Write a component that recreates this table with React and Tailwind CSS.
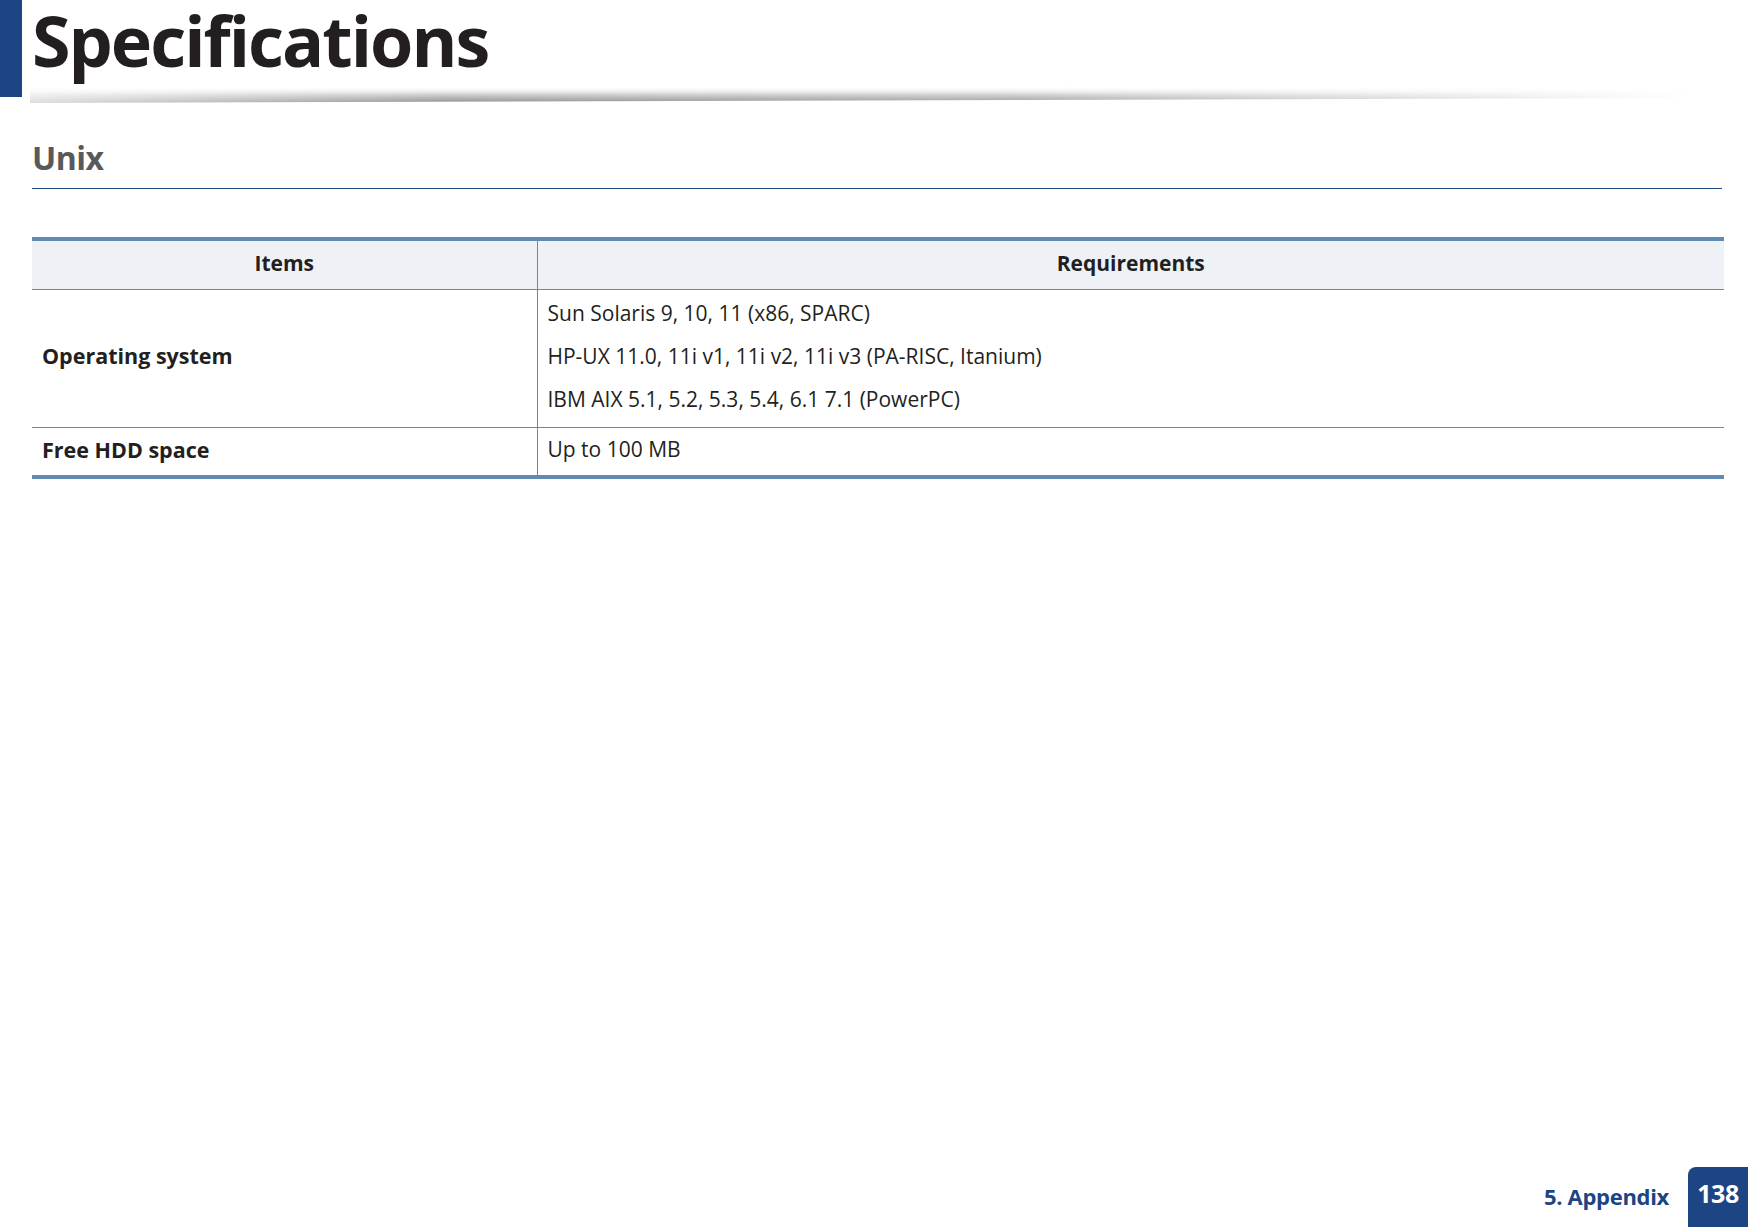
export default function App() {
  const font = "font-['Myriad_Pro','Open_Sans',sans-serif]";
  return (
    <div className={`relative w-[1748px] h-[1227px] bg-white flex flex-col ${font} text-[#231f20]`}>
      {/* Header */}
      <div className="relative flex items-start h-[97px]">
        <div className="w-[22px] h-[97px] bg-[#1d4583]" />
        <h1 className="ml-[10px] mt-[-2px] text-[70px] leading-[84px] font-bold tracking-[-2px] text-[#231f20]">
          Specifications
        </h1>
        <svg className="absolute left-[30px] top-[82px]" width="1660" height="24" viewBox="0 0 1660 24">
          <defs>
            <linearGradient id="sv" x1="0" y1="0" x2="0" y2="1">
              <stop offset="0" stopColor="#ffffff" stopOpacity="0" />
              <stop offset="0.5" stopColor="#d0d0d0" stopOpacity="1" />
              <stop offset="1" stopColor="#8f8f8f" stopOpacity="1" />
            </linearGradient>
            <linearGradient id="sh" x1="0" y1="0" x2="1" y2="0">
              <stop offset="0" stopColor="#fff" stopOpacity="0.3" />
              <stop offset="0.25" stopColor="#fff" stopOpacity="1" />
              <stop offset="0.6" stopColor="#fff" stopOpacity="0.9" />
              <stop offset="1" stopColor="#fff" stopOpacity="0" />
            </linearGradient>
            <mask id="sm">
              <rect x="0" y="0" width="1660" height="24" fill="url(#sh)" />
            </mask>
          </defs>
          <polygon points="0,6 1660,4 1660,16 0,21" fill="url(#sv)" mask="url(#sm)" />
        </svg>
      </div>

      {/* Section heading */}
      <div className="mx-[32px] mt-[40px] border-b border-[#1f4a85] pb-[10px] w-[1690px]">
        <h2 className="text-[32px] leading-[41px] font-bold text-[#58595b] tracking-[-0.5px]">Unix</h2>
      </div>

      {/* Table */}
      <table className="ml-[32px] mt-[48px] w-[1692px] border-collapse text-[21px] text-[#231f20]">
        <thead>
          <tr className="bg-[#eef2f6] border-t-[4px] border-[#6089b3]">
            <th className="w-[505px] h-[50px] pb-[3px] font-bold text-center border-r border-b border-[#6089b3] align-middle">Items</th>
            <th className="h-[50px] pb-[3px] font-bold text-center border-b border-[#6089b3] align-middle">Requirements</th>
          </tr>
        </thead>
        <tbody>
          <tr>
            <td className="pl-[10px] pb-[4px] font-bold text-[21.5px] border-r border-b border-[#6089b3] align-middle">Operating system</td>
            <td className="pl-[10px] border-b border-[#6089b3] h-[136px] pt-[2px] pb-[6px]">
              <div className="flex flex-col">
                <div className="h-[43px] leading-[43px]">Sun Solaris 9, 10, 11 (x86, SPARC)</div>
                <div className="h-[43px] leading-[43px]">HP-UX 11.0, 11i v1, 11i v2, 11i v3 (PA-RISC, Itanium)</div>
                <div className="h-[43px] leading-[43px]">IBM AIX 5.1, 5.2, 5.3, 5.4, 6.1 7.1 (PowerPC)</div>
              </div>
            </td>
          </tr>
          <tr className="border-b-[4px] border-[#6089b3]">
            <td className="pl-[10px] h-[50px] pb-[3px] font-bold text-[21.5px] border-r border-[#6089b3] align-middle">Free HDD space</td>
            <td className="pl-[10px] h-[50px] pb-[3px] align-middle">Up to 100 MB</td>
          </tr>
        </tbody>
      </table>

      {/* Footer */}
      <div className="mt-auto flex items-end justify-end">
        <span className="mb-[14px] mr-[19px] text-[22px] font-bold text-[#1d4583] tracking-[-0.3px]">5. Appendix</span>
        <div className="w-[60px] h-[60px] bg-[#1d4583] rounded-tl-[8px] flex items-center justify-center">
          <span className="text-[25px] font-bold text-white tracking-[-0.5px] mt-[-6px]">138</span>
        </div>
      </div>
    </div>
  );
}
